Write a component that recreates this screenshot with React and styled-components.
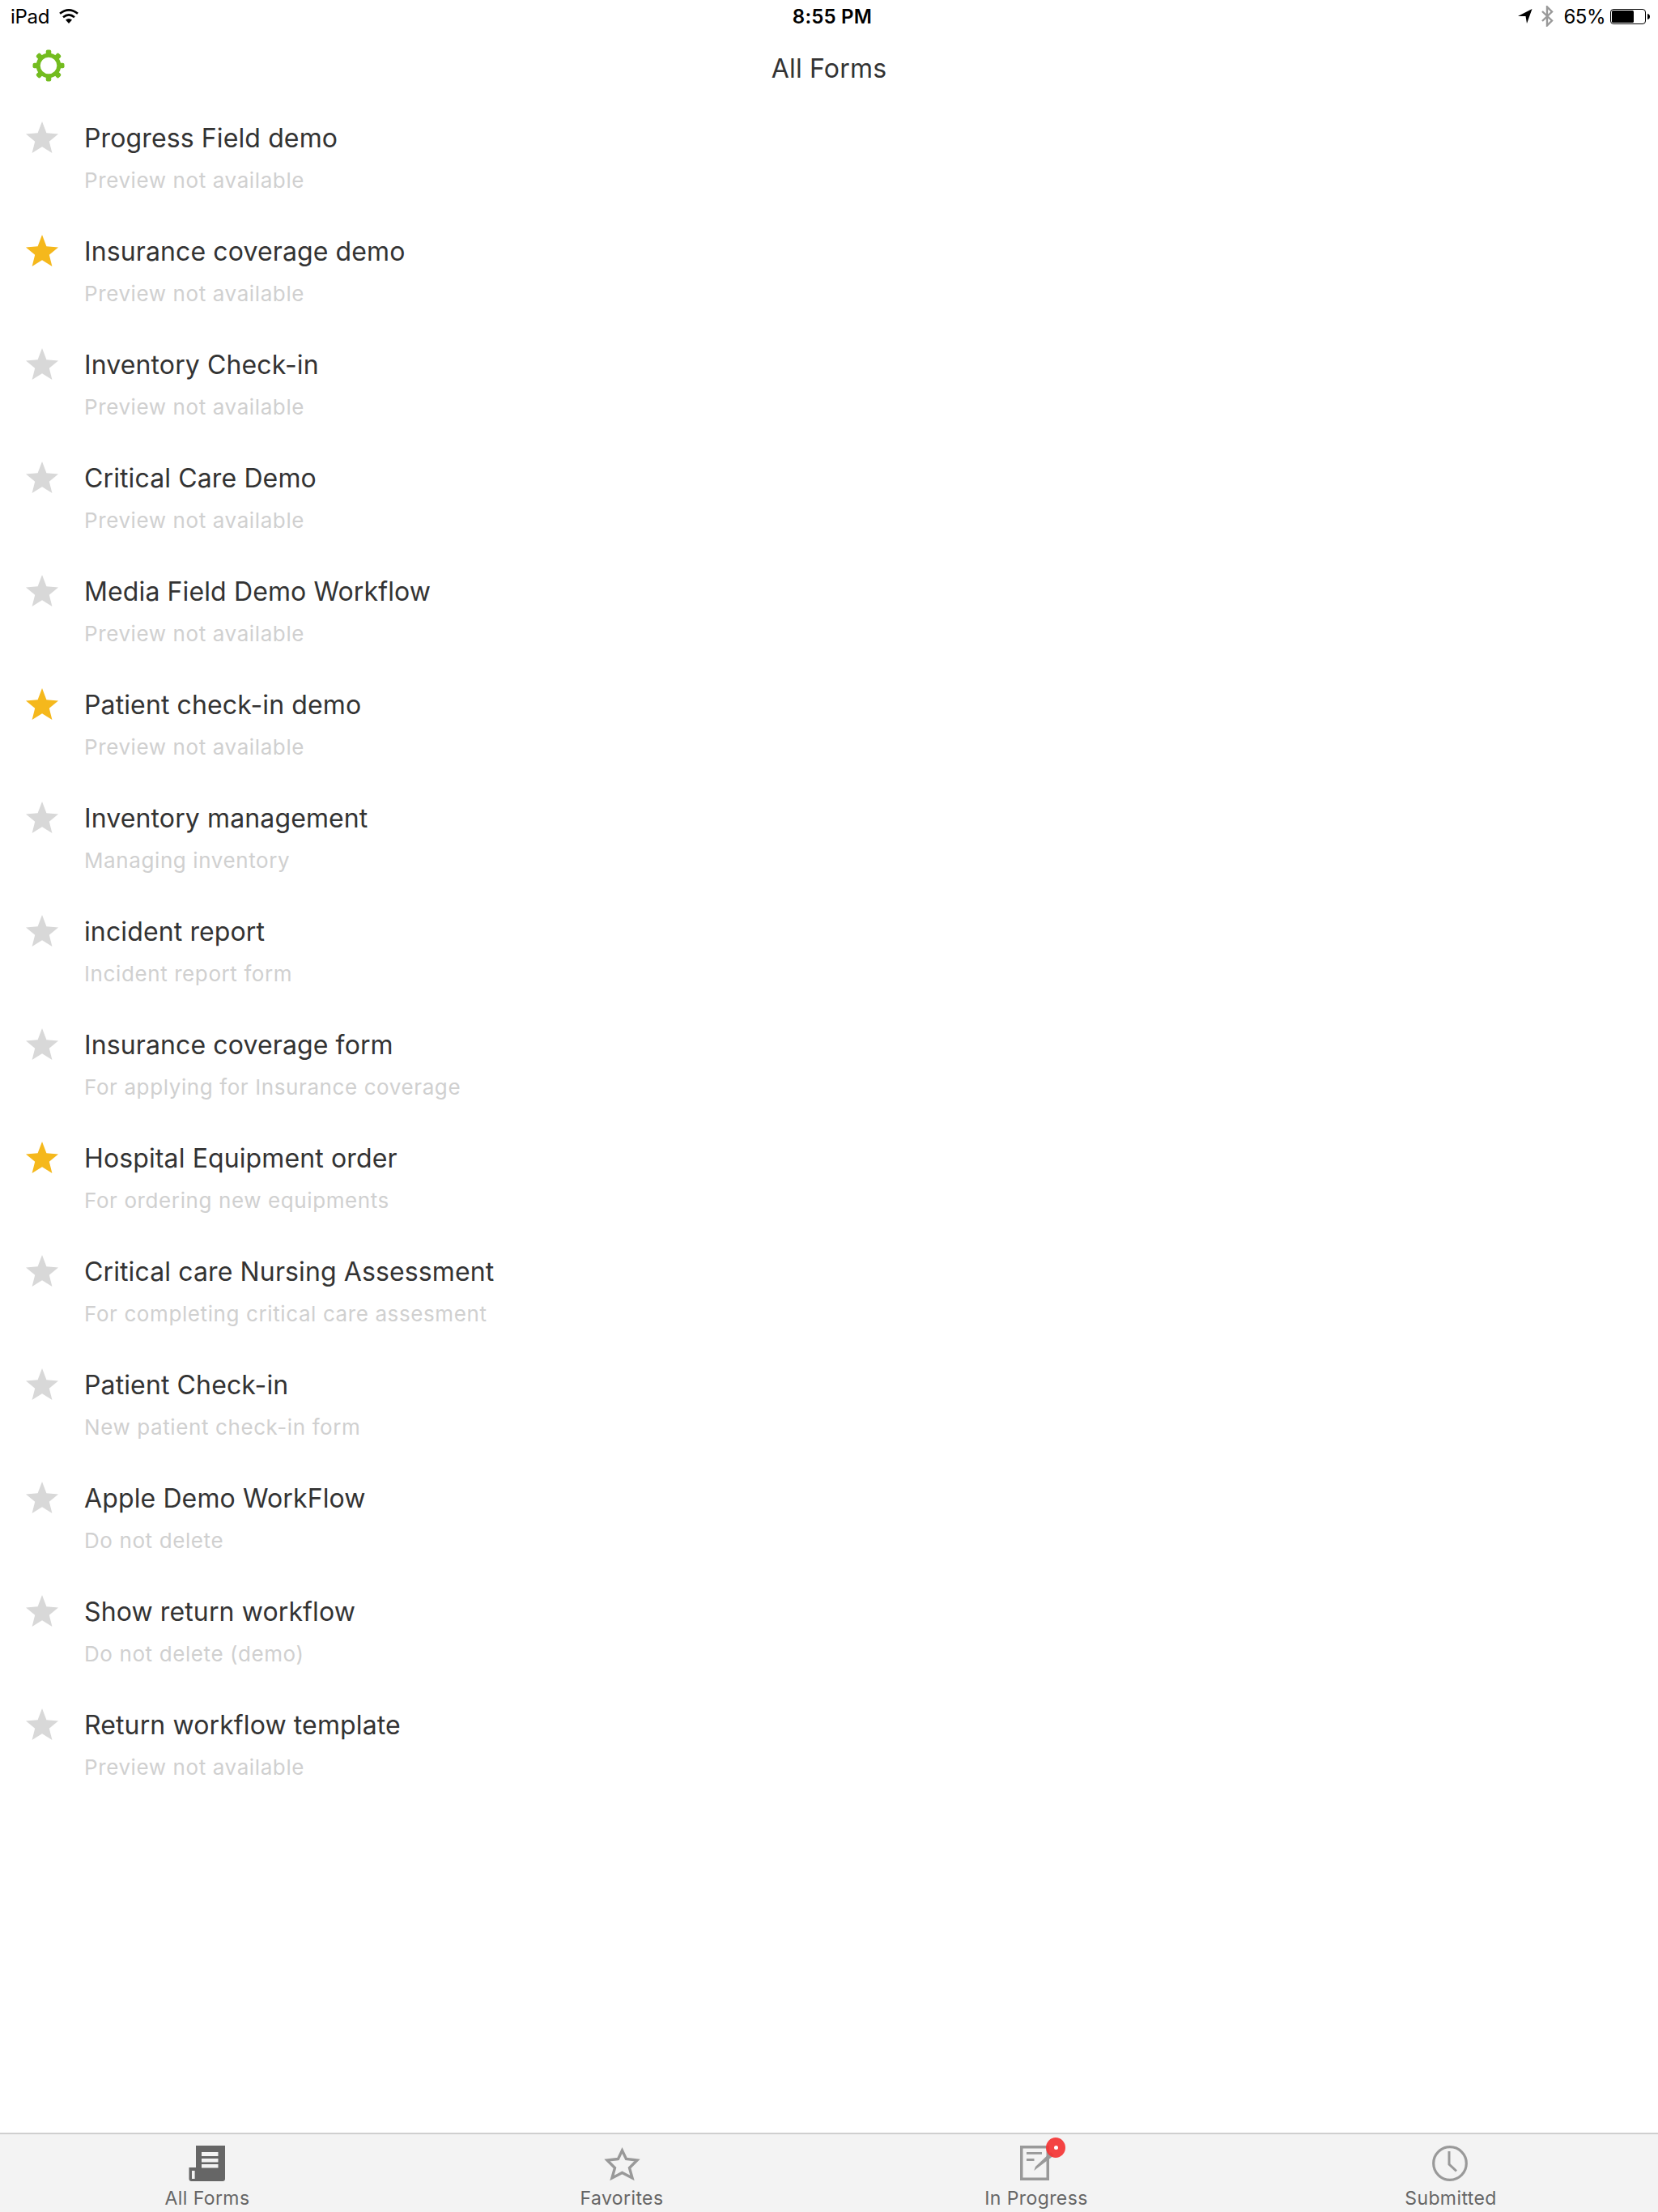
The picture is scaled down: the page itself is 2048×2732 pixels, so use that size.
import React from "react";
import styled, { createGlobalStyle } from "styled-components";

const Global = createGlobalStyle`
  html, body { margin: 0; padding: 0; background: #fff; }
  body { font-family: Inter, "Liberation Sans", sans-serif; }
`;

const Page = styled.div`
  width: 2048px;
  height: 2732px;
  display: flex;
  flex-direction: column;
  background: #fff;
  overflow: hidden;
`;

const StatusBar = styled.div`
  height: 40px;
  flex: none;
  display: grid;
  grid-template-columns: 1fr auto 1fr;
  align-items: center;
  padding: 0 9px 0 13px;
  font-size: 24px;
  color: #000;
`;
const StatusLeft = styled.div`
  display: flex;
  align-items: center;
  gap: 12px;
  letter-spacing: -0.3px;
`;
const StatusTime = styled.div`
  font-weight: 600;
  font-size: 24px;
  letter-spacing: 0.2px;
  padding-left: 4px;
`;
const StatusRight = styled.div`
  display: flex;
  align-items: center;
  justify-content: flex-end;
  gap: 12px;
`;
const LocationArrow = styled.div`
  display: flex;
  margin-right: -2px;
`;
const BatteryGroup = styled.div`
  display: flex;
  align-items: center;
  gap: 6px;
  letter-spacing: -0.5px;
`;

const NavBar = styled.div`
  height: 64px;
  flex: none;
  box-sizing: border-box;
  padding-top: 24px;
  display: flex;
  align-items: center;
  justify-content: center;
  position: relative;
`;
const NavTitle = styled.div`
  font-size: 32px;
  letter-spacing: 0.2px;
  color: #333;
`;
const GearButton = styled.div`
  position: absolute;
  left: 39px;
  top: 20px;
  width: 42px;
  height: 42px;
`;

const List = styled.div`
  flex: 1;
  display: flex;
  flex-direction: column;
`;
const Row = styled.div`
  height: 140px;
  flex: none;
  display: grid;
  grid-template-columns: 104px 1fr;
  align-content: start;
`;
const StarCell = styled.div`
  padding: 45px 0 0 31px;
`;
const RowText = styled.div`
  display: flex;
  flex-direction: column;
  padding-top: 45px;
`;
const RowTitle = styled.div`
  font-size: 32px;
  line-height: 44px;
  letter-spacing: 0.12px;
  color: #333;
`;
const RowSub = styled.div`
  font-size: 26px;
  line-height: 36px;
  letter-spacing: 0.6px;
  margin-top: 12px;
  color: #d0d0d0;
`;

const TabBar = styled.div`
  height: 98px;
  flex: none;
  display: grid;
  grid-template-columns: repeat(4, 512px);
  background: #f3f3f3;
  border-top: 2px solid #cfcfcf;
  box-sizing: border-box;
`;
const Tab = styled.div`
  display: flex;
  flex-direction: column;
  align-items: center;
  padding-top: 13px;
  height: 96px;
  box-sizing: border-box;
  overflow: hidden;
`;
const TabIcon = styled.div`
  position: relative;
  width: 48px;
  height: 46px;
`;
const TabLabel = styled.div`
  font-size: 23px;
  line-height: 30px;
  letter-spacing: 0.4px;
  margin-top: 5px;
  color: #666;
`;
const Badge = styled.div`
  position: absolute;
  right: -12px;
  top: -9px;
  width: 24px;
  height: 25px;
  border-radius: 50%;
  background: rgba(244, 52, 52, 0.92);
  display: flex;
  align-items: center;
  justify-content: center;
  &::after {
    content: "";
    width: 5px;
    height: 5px;
    border-radius: 50%;
    background: #fff;
  }
`;

const Star = ({ color }) => (
  <svg width="42" height="42" viewBox="0 0 42 42">
    <path
      d="M21 1 L26.4 15.2 L41 16.5 L29.8 25.8 L33.4 40 L21 32.2 L8.6 40 L12.2 25.8 L1 16.5 L15.6 15.2 Z"
      fill={color}
    />
  </svg>
);

const Gear = () => {
  const teeth = [];
  for (let i = 0; i < 8; i++) {
    teeth.push(
      <rect
        key={i}
        x="17.75"
        y="1.5"
        width="6.5"
        height="8"
        rx="2"
        fill="#73bc1f"
        transform={`rotate(${i * 45} 21 21)`}
      />
    );
  }
  return (
    <svg width="42" height="42" viewBox="0 0 42 42">
      {teeth}
      <circle cx="21" cy="21" r="12.8" fill="none" stroke="#73bc1f" strokeWidth="5" />
    </svg>
  );
};

const Wifi = () => (
  <svg width="24" height="20" viewBox="0 0 24 20">
    <path d="M12 19 L8 14.5 Q12 11.5 16 14.5 Z" fill="#000" />
    <path d="M5 11.2 Q12 5.5 19 11.2" fill="none" stroke="#000" strokeWidth="2.6" />
    <path d="M1 6.8 Q12 -2.2 23 6.8" fill="none" stroke="#000" strokeWidth="2.6" />
  </svg>
);

const Arrow = () => (
  <svg width="18" height="20" viewBox="0 0 18 20">
    <path d="M0 10 L17.5 1 L11 19 L9.5 10 Z" fill="#000" />
  </svg>
);

const Bluetooth = () => (
  <svg width="16" height="26" viewBox="0 0 16 26">
    <path d="M2 7 L14 18.5 L8 24.5 V1.5 L14 7.5 L2 19" fill="none" stroke="#999" strokeWidth="2.4" />
  </svg>
);

const Battery = () => (
  <svg width="50" height="22" viewBox="0 0 50 22">
    <rect x="0.5" y="2.5" width="43" height="18" rx="3.5" fill="none" stroke="#000" strokeWidth="1" />
    <rect x="2" y="4" width="27" height="15" rx="1.5" fill="#000" />
    <path d="M46 8 C48.5 8.5 49 10 49 11.5 C49 13 48.5 14.5 46 15 Z" fill="#000" />
  </svg>
);

const FormsIcon = () => (
  <svg width="48" height="46" viewBox="0 0 48 46">
    <path d="M10 1 H46 V42 Q46 45 43 45 H4.5 Q1.5 45 1.5 42 V28 H10 Z" fill="#666" />
    <rect x="17" y="9" width="20.5" height="5" fill="#f3f3f3" />
    <rect x="17" y="17" width="20.5" height="4.5" fill="#f3f3f3" />
    <rect x="17" y="24" width="20.5" height="4.5" fill="#f3f3f3" />
    <rect x="5" y="32" width="3.6" height="10" fill="#f3f3f3" />
  </svg>
);

const FavIcon = () => (
  <svg width="48" height="46" viewBox="0 0 48 46">
    <path
      d="M24.5 7 L29.5 17.5 L43 19 L33.5 28.5 L37 41 L24.5 34.5 L12 41 L15.5 28.5 L6 19 L19.5 17.5 Z"
      fill="none"
      stroke="#999"
      strokeWidth="3.4"
    />
  </svg>
);

const ProgressIcon = () => (
  <svg width="48" height="46" viewBox="0 0 48 46">
    <rect x="5.75" y="2.75" width="32.5" height="39.5" fill="none" stroke="#999" strokeWidth="3.5" />
    <rect x="12" y="9" width="19" height="2.8" fill="#999" />
    <rect x="12" y="17" width="9.5" height="3" fill="#999" />
    <path d="M42 9 L46 13 L25 29 L21.3 32 L23 27 Z" fill="#999" />
  </svg>
);

const ClockIcon = () => (
  <svg width="48" height="46" viewBox="0 0 48 46">
    <circle cx="23" cy="23" r="20.3" fill="none" stroke="#999" strokeWidth="3.2" />
    <path d="M22 8 V24 L31 32.5" fill="none" stroke="#999" strokeWidth="3" />
  </svg>
);

const forms = [
  ["Progress Field demo", "Preview not available", false],
  ["Insurance coverage demo", "Preview not available", true],
  ["Inventory Check-in", "Preview not available", false],
  ["Critical Care Demo", "Preview not available", false],
  ["Media Field Demo Workflow", "Preview not available", false],
  ["Patient check-in demo", "Preview not available", true],
  ["Inventory management", "Managing inventory", false],
  ["incident report", "Incident report form", false],
  ["Insurance coverage form", "For applying for Insurance coverage", false],
  ["Hospital Equipment order", "For ordering new equipments", true],
  ["Critical care Nursing Assessment", "For completing critical care assesment", false],
  ["Patient Check-in", "New patient check-in form", false],
  ["Apple Demo WorkFlow", "Do not delete", false],
  ["Show return workflow", "Do not delete (demo)", false],
  ["Return workflow template", "Preview not available", false],
];

export default function App() {
  return (
    <Page>
      <Global />
      <StatusBar>
        <StatusLeft>
          <span>iPad</span>
          <Wifi />
        </StatusLeft>
        <StatusTime>8:55 PM</StatusTime>
        <StatusRight>
          <LocationArrow>
            <Arrow />
          </LocationArrow>
          <Bluetooth />
          <BatteryGroup>
            <span>65%</span>
            <Battery />
          </BatteryGroup>
        </StatusRight>
      </StatusBar>
      <NavBar>
        <GearButton>
          <Gear />
        </GearButton>
        <NavTitle>All Forms</NavTitle>
      </NavBar>
      <List>
        {forms.map(([title, sub, fav]) => (
          <Row key={title}>
            <StarCell>
              <Star color={fav ? "#f5b81c" : "#d8d8d8"} />
            </StarCell>
            <RowText>
              <RowTitle>{title}</RowTitle>
              <RowSub>{sub}</RowSub>
            </RowText>
          </Row>
        ))}
      </List>
      <TabBar>
        <Tab>
          <TabIcon><FormsIcon /></TabIcon>
          <TabLabel>All Forms</TabLabel>
        </Tab>
        <Tab>
          <TabIcon><FavIcon /></TabIcon>
          <TabLabel>Favorites</TabLabel>
        </Tab>
        <Tab>
          <TabIcon>
            <ProgressIcon />
            <Badge />
          </TabIcon>
          <TabLabel>In Progress</TabLabel>
        </Tab>
        <Tab>
          <TabIcon><ClockIcon /></TabIcon>
          <TabLabel>Submitted</TabLabel>
        </Tab>
      </TabBar>
    </Page>
  );
}
